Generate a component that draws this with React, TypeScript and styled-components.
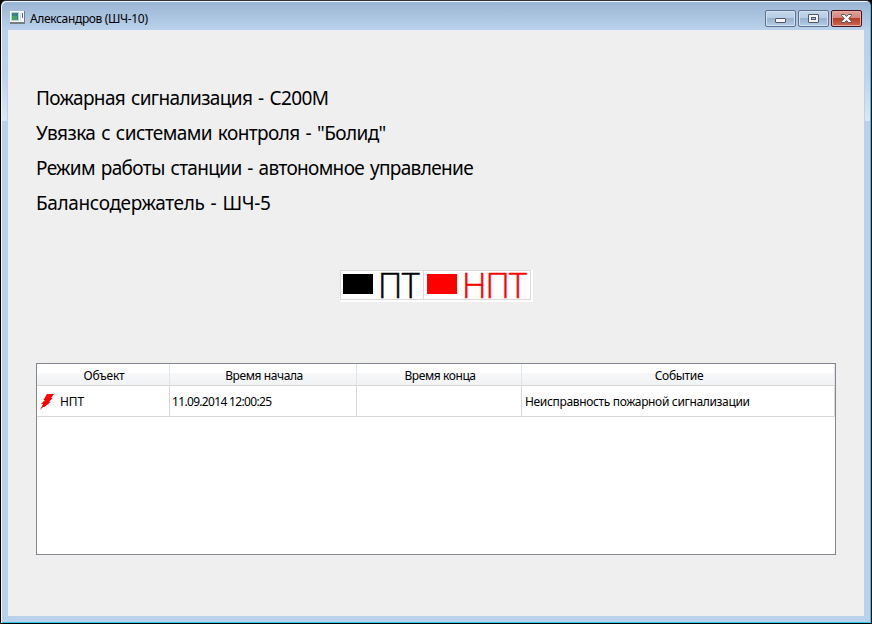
import React from "react";
import styled, { createGlobalStyle } from "styled-components";

const Global = createGlobalStyle`
  html, body { margin: 0; padding: 0; background: #000; }
  * { box-sizing: border-box; }
  body { overflow: hidden; }
`;

const Window = styled.div`
  width: 872px;
  height: 624px;
  display: flex;
  flex-direction: column;
  padding: 2px 7px 7px 7px;
  border: 1px solid #000;
  border-top-color: #2c2c34;
  border-radius: 6px 6px 0 0;
  box-shadow: inset 1px 1px 0 #f4f8fc, inset -1px -1px 0 #27c9e6;
  background:
    linear-gradient(#98b3d2, #b9d1ea) 0 0 / 100% 28px no-repeat,
    linear-gradient(#b9d1ea, #bcd3ec 50%, #dce8f5) 1px 28px / 5px 92px no-repeat,
    linear-gradient(#b9d1ea, #bcd3ec 50%, #dce8f5) 864px 28px / 5px 92px no-repeat,
    #b9d1ea;
  font-family: "DejaVu Sans Condensed", "DejaVu Sans", sans-serif;
  color: #000;
`;

const TitleBar = styled.header`
  flex: 0 0 27px;
  display: flex;
  align-items: flex-start;
  padding: 7px 2px 0 2px;
`;

const AppIcon = styled.svg`
  display: block;
  margin-top: 1px;
`;

const Title = styled.h1<{ $spacing: number }>`
  margin: 1px auto 0 5px;
  font: 400 12px/16px "Noto Sans", sans-serif;
  letter-spacing: ${(p) => p.$spacing}px;
  white-space: nowrap;
`;

const Controls = styled.div`
  display: flex;
  gap: 2px;
`;

const ControlButton = styled.button<{ $danger?: boolean }>`
  width: 31px;
  height: 17px;
  padding: 0;
  display: flex;
  align-items: center;
  justify-content: center;
  border: 1px solid ${(p) => (p.$danger ? "#431422" : "#5e708d")};
  border-radius: 2px;
  box-shadow: inset 0 0 0 1px ${(p) => (p.$danger ? "#e8aaa2" : "#d3e2f1")};
  background: ${(p) =>
    p.$danger
      ? "linear-gradient(#e3a096, #d48679 47%, #b83c25 50%, #cc6a50)"
      : "linear-gradient(#c3d6ea, #b6cde4 47%, #98b3d0 50%, #b3cce4)"};
`;

const Client = styled.main`
  flex: 1;
  display: flex;
  flex-direction: column;
  background: #efefef;
  padding: 51px 28px 0;
`;

const Info = styled.section`
  height: 189px;
`;

const InfoLine = styled.p<{ $spacing: number }>`
  margin: 0;
  height: 35px;
  font: 400 19px/35px "Noto Sans", sans-serif;
  letter-spacing: ${(p) => p.$spacing}px;
  word-spacing: 1.5px;
  white-space: nowrap;
`;

const Legend = styled.div`
  align-self: center;
  display: flex;
  width: 193px;
  height: 32px;
  margin-left: 1px;
  padding: 0 2px 2px 0;
  background: #fff;
`;

const LegendItem = styled.div<{ $color: string; $width: number }>`
  width: ${(p) => p.$width}px;
  height: 30px;
  display: flex;
  border: 1px solid #dadada;
  border-right-width: ${(p) => (p.$width === 83 ? 0 : 1)}px;
  padding: 3px 0 0 ${(p) => (p.$width === 83 ? 2 : 3)}px;
  color: ${(p) => p.$color};
`;

const Swatch = styled.span`
  flex: 0 0 30px;
  height: 20px;
  background: currentColor;
`;

const LegendText = styled.span<{ $spacing: number }>`
  margin-left: 5px;
  margin-top: -2px;
  font: 300 34px/26px "Open Sans", sans-serif;
  -webkit-text-stroke: 0.5px currentColor;
  letter-spacing: ${(p) => p.$spacing}px;
`;

const Table = styled.section`
  width: 800px;
  height: 192px;
  margin-top: 61px;
  border: 1px solid #828790;
  background: #fff;
`;

const Row = styled.div`
  display: grid;
  grid-template-columns: 133px 187px 165px 313px;
  font: 400 12px/16px "Noto Sans", sans-serif;
`;

const HeaderCell = styled.div<{ $spacing: number }>`
  height: 22px;
  padding: 4px 0 0 2px;
  text-align: center;
  letter-spacing: ${(p) => p.$spacing}px;
  border-right: 1px solid #e2e4e7;
  border-bottom: 1px solid #d5d5d5;
  background: linear-gradient(#fff 0 9px, #f7f8fa 9px, #f1f2f4);
`;

const Cell = styled.div<{ $spacing: number; $indent?: number }>`
  height: 31px;
  display: flex;
  align-items: center;
  gap: 4px;
  padding-left: ${(p) => p.$indent ?? 3}px;
  padding-top: 1px;
  letter-spacing: ${(p) => p.$spacing}px;
  white-space: nowrap;
  border-right: 1px solid #d8d8d8;
  border-bottom: 1px solid #d8d8d8;
`;

const Bolt = () => (
  <svg width="16" height="16" viewBox="0 0 16 16">
    <path d="M7 0h7l-3 4h1.500L9 8h1.500L4.500 13H3l-3 3 3-6H1l4-4H3.500z" fill="#f00" />
  </svg>
);

const info: [string, number][] = [
  ["Пожарная сигнализация - С200М", -0.63],
  ["Увязка с системами контроля - \"Болид\"", -0.57],
  ["Режим работы станции - автономное управление", -0.65],
  ["Балансодержатель - ШЧ-5", -0.35],
];

const headers: [string, number][] = [
  ["Объект", -0.2],
  ["Время начала", -0.4],
  ["Время конца", -0.4],
  ["Событие", -0.3],
];

export default function App() {
  return (
    <>
      <Global />
      <Window>
        <TitleBar>
          <AppIcon width="15" height="13" viewBox="0 0 15 13">
            <rect width="15" height="13" fill="#777e83" />
            <rect width="14" height="11" fill="#f8f8f8" />
            <rect x="1" y="1" width="8" height="9" fill="#b9d3da" />
            <rect x="2" y="2" width="6" height="7" fill="#397f86" />
            <rect x="2" y="5" width="5" height="4" fill="#45a367" />
            <rect x="10" y="2" width="1" height="8" fill="#ddd" />
            <rect x="12" y="2" width="1" height="5" fill="#3f7094" />
          </AppIcon>
          <Title $spacing={-0.35}>Александров (ШЧ-10)</Title>
          <Controls>
            <ControlButton aria-label="Свернуть">
              <svg width="11" height="13" viewBox="0 0 11 13">
                <rect x=".5" y="6.500" width="10" height="4" rx=".5" fill="#f5f5f5" stroke="#535666" />
              </svg>
            </ControlButton>
            <ControlButton aria-label="Развернуть">
              <svg width="11" height="9" viewBox="0 0 11 9">
                <rect x=".5" y=".5" width="10" height="8" rx=".5" fill="#f5f5f5" stroke="#535666" />
                <rect x="3.5" y="3.5" width="4" height="2" fill="#a9c3dc" stroke="#535666" />
              </svg>
            </ControlButton>
            <ControlButton $danger aria-label="Закрыть">
              <svg width="11" height="9" viewBox="0 0 11 9">
                <path d="M.5 .5h3l2 2 2-2h3v1L7.800 4.500l2.700 3v1h-3l-2-2-2 2h-3v-1l2.700-3L.5 1.500z" fill="#f5f5f5" stroke="#535666" />
              </svg>
            </ControlButton>
          </Controls>
        </TitleBar>
        <Client>
          <Info>
            {info.map(([text, spacing]) => (
              <InfoLine key={text} $spacing={spacing}>{text}</InfoLine>
            ))}
          </Info>
          <Legend>
            <LegendItem $color="#000" $width={83}>
              <Swatch />
              <LegendText $spacing={-0.6}>ПТ</LegendText>
            </LegendItem>
            <LegendItem $color="#f00" $width={108}>
              <Swatch />
              <LegendText $spacing={-0.9}>НПТ</LegendText>
            </LegendItem>
          </Legend>
          <Table>
            <Row>
              {headers.map(([text, spacing]) => (
                <HeaderCell key={text} $spacing={spacing}>{text}</HeaderCell>
              ))}
            </Row>
            <Row>
              <Cell $spacing={-0.1}><Bolt />НПТ</Cell>
              <Cell $spacing={-0.67} $indent={2}>11.09.2014 12:00:25</Cell>
              <Cell $spacing={0} />
              <Cell $spacing={-0.34}>Неисправность пожарной сигнализации</Cell>
            </Row>
          </Table>
        </Client>
      </Window>
    </>
  );
}
